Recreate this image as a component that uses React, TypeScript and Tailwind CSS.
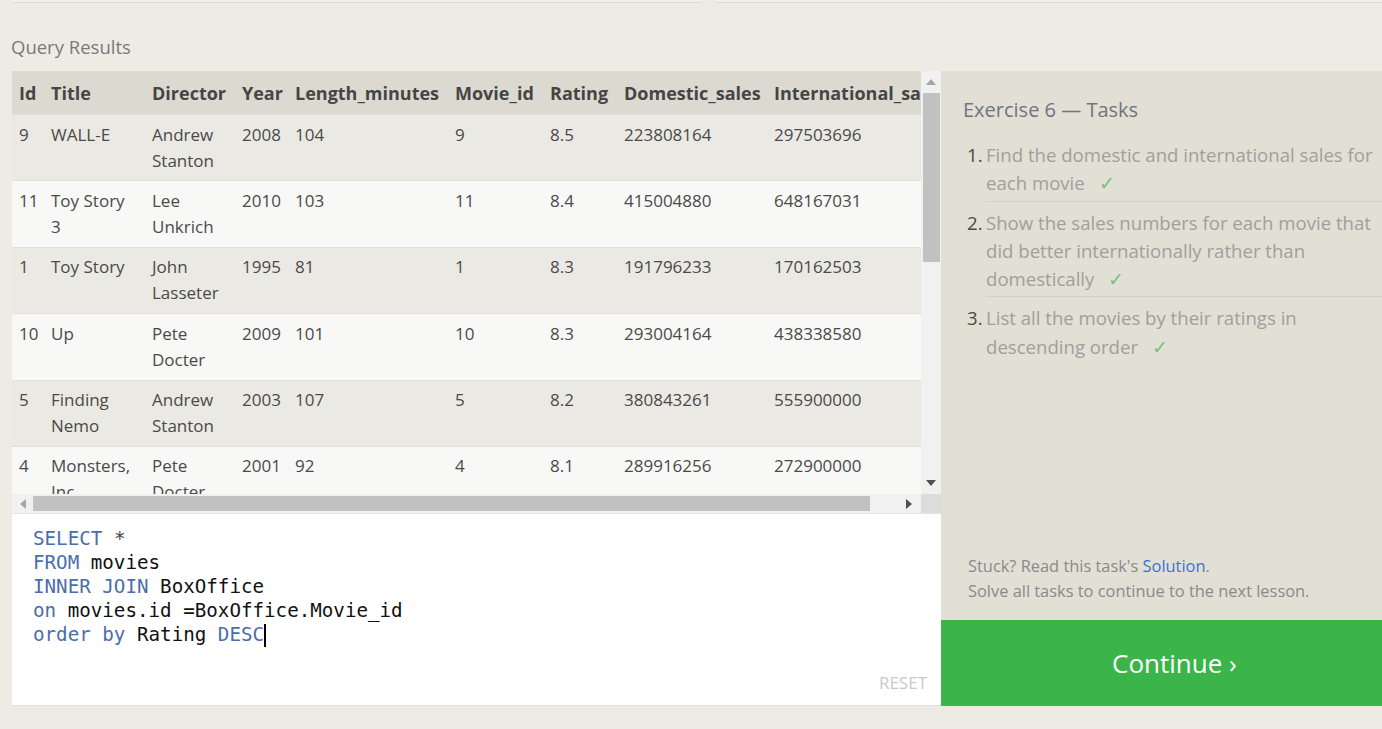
import React from 'react';

type Row = { cells: string[][] };

const COLS = 'grid-cols-[32px_101px_90px_53px_160px_95px_74px_150px_180px]';

const headers = ['Id', 'Title', 'Director', 'Year', 'Length_minutes', 'Movie_id', 'Rating', 'Domestic_sales', 'International_sales'];

const rows: Row[] = [
  { cells: [['9'], ['WALL-E'], ['Andrew', 'Stanton'], ['2008'], ['104'], ['9'], ['8.5'], ['223808164'], ['297503696']] },
  { cells: [['11'], ['Toy Story', '3'], ['Lee', 'Unkrich'], ['2010'], ['103'], ['11'], ['8.4'], ['415004880'], ['648167031']] },
  { cells: [['1'], ['Toy Story'], ['John', 'Lasseter'], ['1995'], ['81'], ['1'], ['8.3'], ['191796233'], ['170162503']] },
  { cells: [['10'], ['Up'], ['Pete', 'Docter'], ['2009'], ['101'], ['10'], ['8.3'], ['293004164'], ['438338580']] },
  { cells: [['5'], ['Finding', 'Nemo'], ['Andrew', 'Stanton'], ['2003'], ['107'], ['5'], ['8.2'], ['380843261'], ['555900000']] },
  { cells: [['4'], ['Monsters,', 'Inc.'], ['Pete', 'Docter'], ['2001'], ['92'], ['4'], ['8.1'], ['289916256'], ['272900000']] },
  { cells: [['2'], ["A Bug's", 'Life'], ['John', 'Lasseter'], ['1998'], ['95'], ['2'], ['7.2'], ['162798565'], ['200600000']] },
];

const tasks = [
  ['Find the domestic and international sales for', 'each movie'],
  ['Show the sales numbers for each movie that', 'did better internationally rather than', 'domestically'],
  ['List all the movies by their ratings in', 'descending order'],
];

function Triangle({ dir, className }: { dir: 'up' | 'down' | 'left' | 'right'; className: string }) {
  const pts = {
    up: '0,6 5,0 10,6',
    down: '0,0 10,0 5,6',
    left: '6,0 6,10 0,5',
    right: '0,0 0,10 6,5',
  }[dir];
  const vertical = dir === 'up' || dir === 'down';
  return (
    <svg width={vertical ? 10 : 6} height={vertical ? 6 : 10} viewBox={vertical ? '0 0 10 6' : '0 0 6 10'} className={className}>
      <polygon points={pts} fill="currentColor" />
    </svg>
  );
}

export default function App() {
  const kw = 'text-[#4a6ea9]';
  return (
    <div className="min-h-screen bg-[#eeebe5] font-['Open_Sans',sans-serif] overflow-hidden">
      {/* tail of the previous table */}
      <div className="flex h-[3px]">
        <div className="ml-[12px] w-[690px] border-b border-[#dedbd2] bg-[#f2f0eb]" />
        <div className="ml-[13px] flex-1 border-b border-[#dedbd2] bg-[#f2f0eb]" />
      </div>

      <h2 className="pl-[11px] pt-[32px] text-[18.5px] leading-[24px] text-[#7a7a7a] font-normal">Query Results</h2>

      <div className="mt-[12px] flex h-[635px]">
        {/* left column */}
        <div className="ml-[12px] flex w-[929px] flex-col">
          <div className="flex h-[423px]">
            <div className="w-[909px] overflow-hidden">
              <div className={`grid ${COLS} w-max bg-[#dcdad0] text-[18px] font-bold leading-[26px] text-[#454545]`}>
                {headers.map(h => (
                  <div key={h} className="whitespace-nowrap px-[7px] py-[8.5px]">{h}</div>
                ))}
              </div>
              {rows.map((r, i) => (
                <div
                  key={i}
                  className={`grid ${COLS} w-max border-t border-[#e2e0d8] text-[17px] leading-[26px] text-[#4a4a4a] ${i % 2 === 0 ? 'bg-[#ebe9e3]' : 'bg-[#f8f8f7]'}`}
                >
                  {r.cells.map((c, j) => (
                    <div key={j} className="px-[7px] pt-[6.5px] pb-[6.9px]">
                      {c.map((line, k) => (
                        <div key={k} className="whitespace-nowrap">{line}</div>
                      ))}
                      {c.length === 1 && <div>&nbsp;</div>}
                    </div>
                  ))}
                </div>
              ))}
            </div>
            {/* vertical scrollbar */}
            <div className="flex w-[20px] flex-col items-center bg-[#f1f1f1]">
              <div className="flex h-[22px] items-center">
                <Triangle dir="up" className="text-[#a5a5a5]" />
              </div>
              <div className="h-[169px] w-[17px] bg-[#c1c1c1]" />
              <div className="flex-1" />
              <div className="flex h-[22px] items-center">
                <Triangle dir="down" className="text-[#505050]" />
              </div>
            </div>
          </div>
          {/* horizontal scrollbar */}
          <div className="flex h-[20px] border-b border-[#e6e4de]">
            <div className="flex w-[909px] items-center bg-[#f1f1f1]">
              <div className="flex w-[21px] justify-center">
                <Triangle dir="left" className="text-[#a5a5a5]" />
              </div>
              <div className="h-[15px] w-[837px] bg-[#c1c1c1]" />
              <div className="flex flex-1 justify-end pr-[9px]">
                <Triangle dir="right" className="text-[#505050]" />
              </div>
            </div>
            <div className="w-[20px] bg-[#dcdcdc]" />
          </div>

          {/* editor */}
          <div className="flex flex-1 flex-col border-b border-[#e3e1da] bg-white">
            <div className="pl-[21px] pt-[13px] font-['DejaVu_Sans_Mono',monospace] text-[19.2px] leading-[24px] text-[#111] whitespace-pre">
              <div><span className={kw}>SELECT</span> <span className="text-[#444]">*</span></div>
              <div><span className={kw}>FROM</span> movies</div>
              <div><span className={kw}>INNER JOIN</span> BoxOffice</div>
              <div><span className={kw}>on</span> movies.id =BoxOffice.Movie_id</div>
              <div className="flex items-center">
                <span className={kw}>order by</span>&nbsp;Rating&nbsp;<span className={kw}>DESC</span>
                <span className="inline-block h-[23px] w-[2px] bg-black" />
              </div>
            </div>
            <div className="flex-1" />
            <div className="pb-[10px] pr-[14px] text-right text-[17px] leading-[24px] text-[#cacaca]">RESET</div>
          </div>
        </div>

        {/* right column */}
        <div className="flex flex-1 flex-col">
          <div className="flex flex-1 flex-col bg-[#e2dfd5] pl-[22px]">
            <h3 className="pt-[25px] text-[20px] leading-[28px] font-normal text-[#6f7580]">Exercise 6 — Tasks</h3>
            <ol className="mt-[17px] text-[18.6px] leading-[28.3px]">
              {tasks.map((t, i) => (
                <li key={i} className={`flex ${i > 0 ? 'pt-[7px]' : ''}`}>
                  <span className="w-[23px] shrink-0 pl-[4px] text-[#4a4a4a]">{i + 1}.</span>
                  <div
                    className={`flex-1 overflow-hidden text-[#a0a09c] ${i < tasks.length - 1 ? 'border-b border-[#d4d1c6] pb-[3px]' : ''}`}
                  >
                    {t.map((line, k) => (
                      <div key={k} className="whitespace-nowrap">
                        {line}
                        {k === t.length - 1 && <span className="ml-[14px] text-[#74c27b]">✓</span>}
                      </div>
                    ))}
                  </div>
                </li>
              ))}
            </ol>
            <div className="flex-1" />
            <div className="pb-[17px] pl-[5px] text-[16.4px] leading-[25px] text-[#8a8a8a]">
              <p>
                Stuck? Read this task's <span className="text-[#3d6fd6]">Solution</span>.
              </p>
              <p>Solve all tasks to continue to the next lesson.</p>
            </div>
          </div>
          <div className="flex h-[86px] items-center justify-center bg-[#3bb54a] pl-[26px] text-[26px] text-white">
            Continue ›
          </div>
        </div>
      </div>
    </div>
  );
}
